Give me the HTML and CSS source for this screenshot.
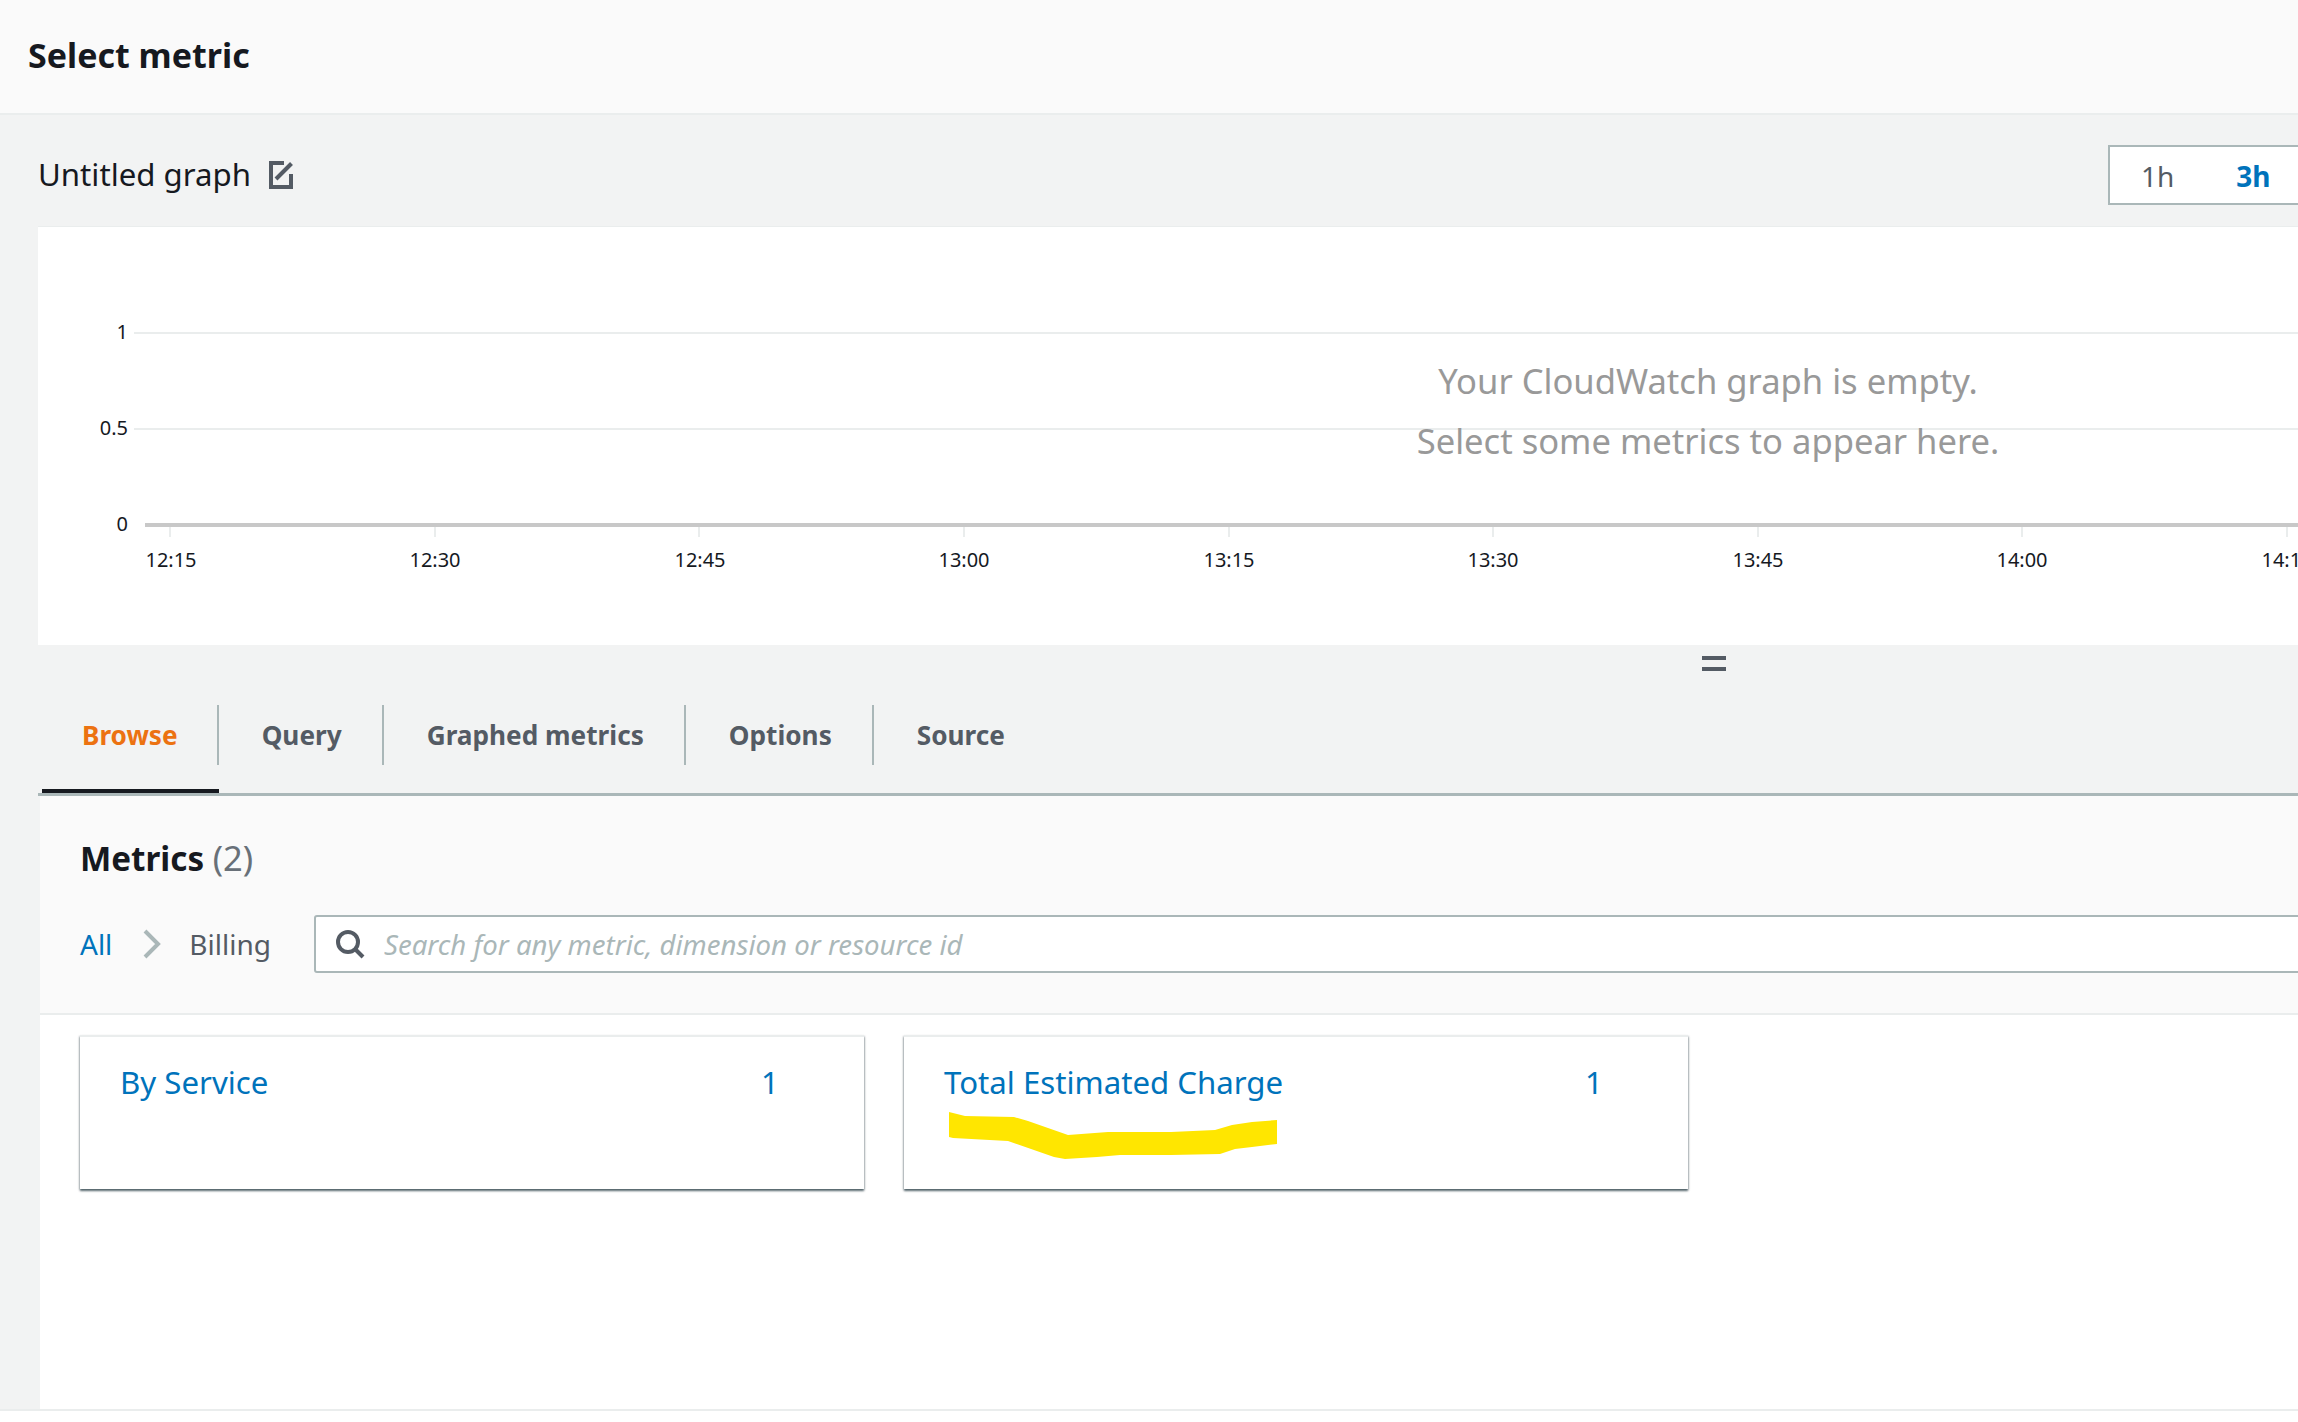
FILE: index.html
```html
<!DOCTYPE html>
<html lang="en">
<head>
    <meta charset="UTF-8">
    <meta name="viewport" content="width=device-width, initial-scale=1.0">
    <title>Select metric</title>
    <link rel="stylesheet" href="styles.css">
</head>
<body>

<div class="modal">
    <header class="modal-header">
        <h1>Select metric</h1>
    </header>

    <div class="content">
        <div class="graph-bar">
            <span class="graph-title">Untitled graph</span>
            <svg class="edit-icon" width="24" height="28" viewBox="0 0 24 28" fill="none" stroke="#545b64" stroke-width="4">
                <path d="M15 2H2v24h20V13"/>
                <path d="M7 18L22.5 2.5"/>
            </svg>
            <div class="range">
                <span class="range-item">1h</span>
                <span class="range-item active">3h</span>
            </div>
        </div>

        <div class="graph">
            <svg class="chart" width="2260" height="418" viewBox="38 227 2260 418">
                <g class="grid">
                    <line x1="134" y1="333" x2="2298" y2="333"/>
                    <line x1="134" y1="429" x2="2298" y2="429"/>
                </g>
                <g class="ticks">
                    <line x1="170" y1="527" x2="170" y2="537"/>
                    <line x1="435" y1="527" x2="435" y2="537"/>
                    <line x1="699" y1="527" x2="699" y2="537"/>
                    <line x1="964" y1="527" x2="964" y2="537"/>
                    <line x1="1229" y1="527" x2="1229" y2="537"/>
                    <line x1="1493" y1="527" x2="1493" y2="537"/>
                    <line x1="1758" y1="527" x2="1758" y2="537"/>
                    <line x1="2022" y1="527" x2="2022" y2="537"/>
                    <line x1="2287" y1="527" x2="2287" y2="537"/>
                </g>
                <line class="baseline" x1="145" y1="525" x2="2298" y2="525"/>
                <g class="y-labels">
                    <text x="128" y="339">1</text>
                    <text x="128" y="435">0.5</text>
                    <text x="128" y="531">0</text>
                </g>
                <g class="x-labels">
                    <text x="171" y="567">12:15</text>
                    <text x="435" y="567">12:30</text>
                    <text x="700" y="567">12:45</text>
                    <text x="964" y="567">13:00</text>
                    <text x="1229" y="567">13:15</text>
                    <text x="1493" y="567">13:30</text>
                    <text x="1758" y="567">13:45</text>
                    <text x="2022" y="567">14:00</text>
                    <text x="2287" y="567">14:15</text>
                </g>
            </svg>
            <div class="graph-empty">
                <div>Your CloudWatch graph is empty.</div>
                <div>Select some metrics to appear here.</div>
            </div>
        </div>

        <div class="resize-row">
            <div class="resize-handle"></div>
        </div>

        <div class="tabs">
            <div class="tab active"><span class="tab-label">Browse</span></div>
            <div class="tab"><span class="tab-label">Query</span></div>
            <div class="tab"><span class="tab-label">Graphed metrics</span></div>
            <div class="tab"><span class="tab-label">Options</span></div>
            <div class="tab"><span class="tab-label last">Source</span></div>
        </div>

        <div class="metrics-head">
            <h2>Metrics <span class="count">(2)</span></h2>
            <div class="search-row">
                <a class="crumb-link">All</a>
                <svg class="crumb-sep" width="18" height="30" viewBox="0 0 18 30" fill="none" stroke="#aab7b8" stroke-width="4">
                    <polyline points="2,2 15,15 2,28"/>
                </svg>
                <span class="crumb">Billing</span>
                <div class="search">
                    <svg width="29" height="29" viewBox="0 0 29 29" fill="none" stroke="#545b64" stroke-width="4">
                        <circle cx="12" cy="12" r="10"/>
                        <line x1="19" y1="19" x2="27" y2="27"/>
                    </svg>
                    <input type="text" placeholder="Search for any metric, dimension or resource id">
                </div>
            </div>
        </div>

        <div class="metrics-body">
            <div class="cards">
                <div class="card">
                    <a class="card-title">By Service</a>
                    <a class="card-count">1</a>
                </div>
                <div class="card">
                    <a class="card-title">Total Estimated Charge</a>
                    <a class="card-count">1</a>
                    <!-- yellow marker scribble on top of the card -->
                    <svg class="scribble" width="332" height="50" viewBox="945 1110 332 50">
                        <path d="M949 1112L965 1116L1014 1117L1028 1121L1068 1135L1108 1132L1171 1132L1215 1130L1232 1125L1252 1122L1277 1120L1277 1144L1252 1147L1235 1149L1220 1154L1171 1155L1120 1155L1097 1157L1065 1159L1054 1157L1008 1141L953 1138L949 1137Z"/>
                    </svg>
                </div>
            </div>
        </div>
    </div>
</div>

</body>
</html>
```

FILE: styles.css
```css
* {
    box-sizing: border-box;
}

html, body {
    margin: 0;
    height: 100%;
    overflow: hidden;
}

body {
    font-family: "Noto Sans", sans-serif;
    background-color: #fff;
    color: #16191f;
}

h1, h2 {
    margin: 0;
}

.modal-header {
    height: 115px;
    padding-left: 28px;
    display: flex;
    align-items: center;
    background-color: #fafafa;
    border-bottom: 2px solid #eaeded;
}

.modal-header h1 {
    font-size: 34px;
    font-weight: 700;
    margin-top: -4px;
}

.content {
    background-color: #f2f3f3;
    border-bottom: 2px solid #eaeded;
}

.graph-bar {
    height: 111px;
    padding: 30px 0 0 38px;
    display: flex;
    align-items: flex-start;
}

.graph-title {
    font-size: 31.2px;
    line-height: 59px;
}

.edit-icon {
    margin: 16px 0 0 18px;
}

.range {
    margin-left: auto;
    width: 190px;
    height: 60px;
    display: flex;
    align-items: center;
    padding: 2px 0 0 31px;
    gap: 62px;
    background-color: #fff;
    border: 2px solid #aab7b8;
    border-right: none;
}

.range-item {
    font-size: 28px;
    color: #545b64;
}

.range-item.active {
    color: #0073bb;
    font-weight: 700;
}

.graph {
    position: relative;
    margin-left: 38px;
    height: 419px;
    background-color: #fff;
    border-top: 1px solid #eaeded;
}

.chart {
    display: block;
}

.grid line {
    stroke: #eaeded;
    stroke-width: 2;
}

.ticks line {
    stroke: #eaeded;
    stroke-width: 2;
}

.baseline {
    stroke: #c8c8c8;
    stroke-width: 4;
}

.y-labels text, .x-labels text {
    font-family: "Noto Sans", sans-serif;
    font-size: 20px;
    fill: #16191f;
}

.y-labels text {
    text-anchor: end;
}

.x-labels text {
    text-anchor: middle;
}

.graph-empty {
    position: absolute;
    top: 124px;
    left: 1270px;
    width: 800px;
    text-align: center;
    font-size: 34.6px;
    line-height: 60px;
    color: #999;
}

.resize-row {
    height: 60px;
    padding: 11px 0 0 1702px;
}

.resize-handle {
    width: 24px;
    height: 15px;
    border-top: 4px solid #545b64;
    border-bottom: 4px solid #545b64;
}

.tabs {
    margin-left: 38px;
    padding-left: 4px;
    display: flex;
    height: 91px;
    border-bottom: 3px solid #aab7b8;
}

.tab {
    height: 88px;
}

.tab.active {
    border-bottom: 4px solid #16191f;
}

.tab-label {
    height: 60px;
    display: flex;
    align-items: center;
    padding: 0 40px 0 43px;
    border-right: 2px solid #aab7b8;
    font-size: 26.2px;
    font-weight: 700;
    color: #545b64;
}

.tab-label.last {
    border-right: none;
}

.tab.active .tab-label {
    padding: 0 39px 0 40px;
    color: #ec7211;
}

.metrics-head {
    margin-left: 40px;
    padding: 42px 0 40px 40px;
    background-color: #fafafa;
    border-bottom: 2px solid #eaeded;
}

.metrics-head h2 {
    height: 40px;
    font-size: 33.2px;
    line-height: 40px;
    font-weight: 700;
}

.count {
    font-size: 34.5px;
    font-weight: 400;
    color: #687078;
}

.search-row {
    margin-top: 37px;
    display: flex;
    align-items: center;
    font-size: 28px;
}

.crumb-link {
    color: #0073bb;
}

.crumb-sep {
    margin: 0 28px 0 31px;
}

.crumb {
    color: #545b64;
}

.search {
    flex: 1;
    height: 58px;
    margin-left: 43px;
    margin-right: -20px;
    padding-left: 20px;
    display: flex;
    align-items: center;
    gap: 19px;
    background-color: #fff;
    border: 2px solid #aab7b8;
    border-radius: 3px;
}

.search input {
    flex: 1;
    border: none;
    outline: none;
    padding: 0;
    font-family: inherit;
    font-size: 27.6px;
    font-style: italic;
}

.search input::placeholder {
    color: #aab7b8;
    opacity: 1;
}

.metrics-body {
    margin-left: 40px;
    height: 394px;
    padding: 20px 40px 0;
    background-color: #fff;
}

.cards {
    display: grid;
    grid-template-columns: 784px 784px;
    gap: 40px;
}

.card {
    position: relative;
    height: 154px;
    padding: 29px 40px 0 40px;
    display: grid;
    grid-template-columns: 641px 1fr;
    align-content: start;
    font-size: 31.2px;
    line-height: 32px;
    color: #0073bb;
    background-color: #fff;
    border-top: 2px solid #eaeded;
    box-shadow: 0 2px 2px rgba(0, 28, 36, 0.6), 1px 1px 2px rgba(0, 28, 36, 0.15), -1px 1px 2px rgba(0, 28, 36, 0.15);
}

.scribble {
    position: absolute;
    left: 41px;
    top: 73px;
}

.scribble path {
    fill: #ffe600;
}
```
